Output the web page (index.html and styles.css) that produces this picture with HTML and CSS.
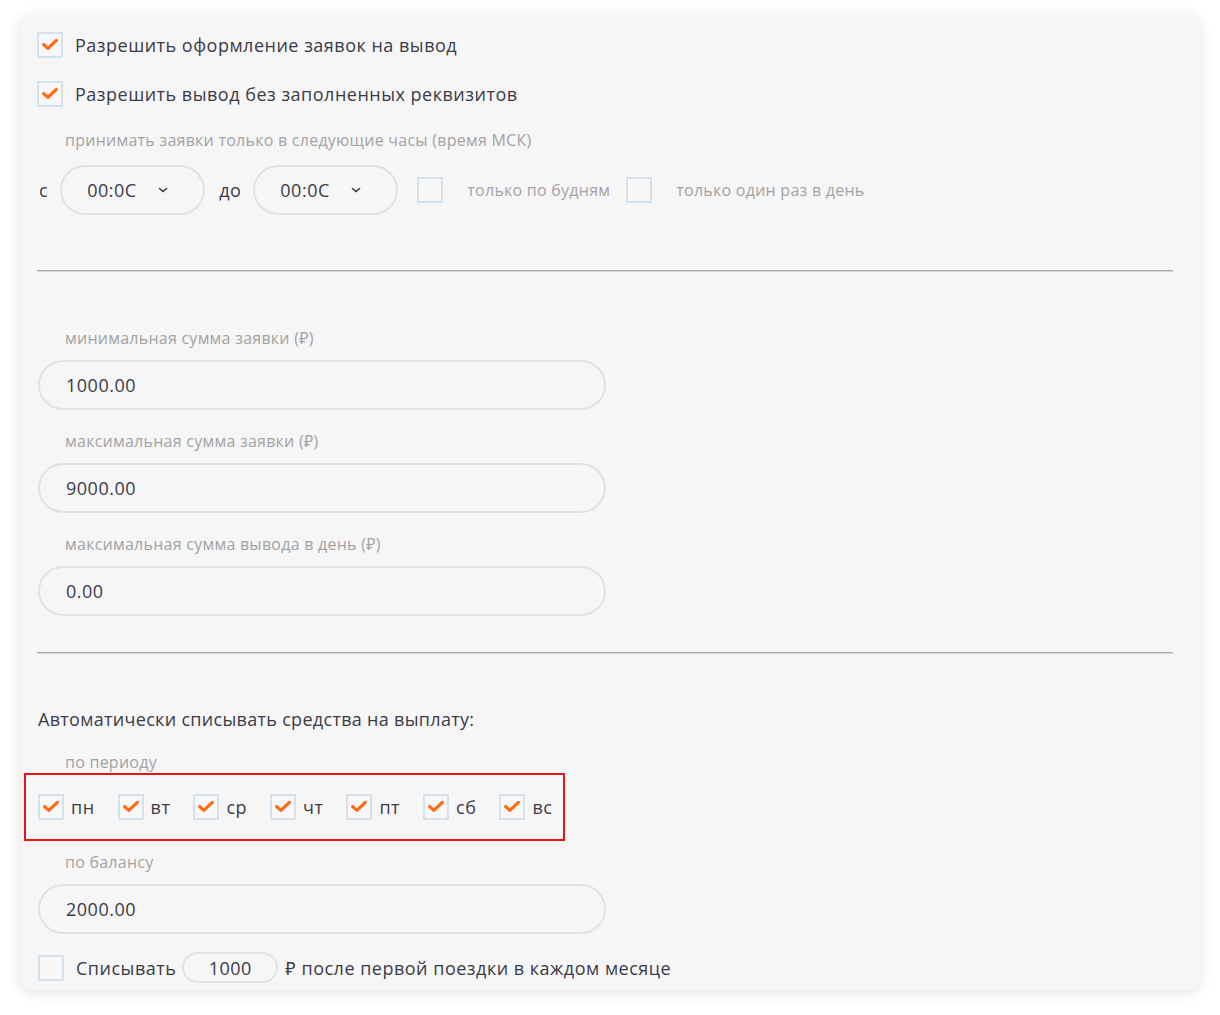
FILE: index.html
```html
<!DOCTYPE html>
<html lang="ru">
<head>
    <meta charset="UTF-8">
    <title>Настройки вывода</title>
    <link rel="stylesheet" href="styles.css">
</head>
<body>
    <div class="card">
        <label class="check-row">
            <span class="box checked"><svg viewBox="0 0 26 26"><path d="M5.5 12.5 L10.5 17 L20.5 7.5"/></svg></span>
            <span class="check-text">Разрешить оформление заявок на вывод</span>
        </label>
        <label class="check-row">
            <span class="box checked"><svg viewBox="0 0 26 26"><path d="M5.5 12.5 L10.5 17 L20.5 7.5"/></svg></span>
            <span class="check-text">Разрешить вывод без заполненных реквизитов</span>
        </label>

        <div class="field-label hours-label">принимать заявки только в следующие часы (время МСК)</div>
        <div class="hours-row">
            <span class="hours-word">с</span>
            <div class="time-select">
                <span class="time-value">00:0C</span>
                <svg class="chevron" viewBox="0 0 10 6"><path d="M1.5 1.5 L5 4.5 L8.5 1.5"/></svg>
            </div>
            <span class="hours-word">до</span>
            <div class="time-select">
                <span class="time-value">00:0C</span>
                <svg class="chevron" viewBox="0 0 10 6"><path d="M1.5 1.5 L5 4.5 L8.5 1.5"/></svg>
            </div>
            <span class="box"></span>
            <span class="muted-text">только по будням</span>
            <span class="box"></span>
            <span class="muted-text">только один раз в день</span>
        </div>

        <hr class="divider first-divider">

        <div class="field-label">минимальная сумма заявки (₽)</div>
        <div class="text-input">1000.00</div>
        <div class="field-label">максимальная сумма заявки (₽)</div>
        <div class="text-input">9000.00</div>
        <div class="field-label">максимальная сумма вывода в день (₽)</div>
        <div class="text-input">0.00</div>

        <hr class="divider second-divider">

        <div class="section-title">Автоматически списывать средства на выплату:</div>
        <div class="field-label period-label">по периоду</div>
        <div class="days-wrap">
            <div class="days">
                <label class="day"><span class="box checked"><svg viewBox="0 0 26 26"><path d="M5.5 12.5 L10.5 17 L20.5 7.5"/></svg></span><span>пн</span></label>
                <label class="day"><span class="box checked"><svg viewBox="0 0 26 26"><path d="M5.5 12.5 L10.5 17 L20.5 7.5"/></svg></span><span>вт</span></label>
                <label class="day"><span class="box checked"><svg viewBox="0 0 26 26"><path d="M5.5 12.5 L10.5 17 L20.5 7.5"/></svg></span><span>ср</span></label>
                <label class="day"><span class="box checked"><svg viewBox="0 0 26 26"><path d="M5.5 12.5 L10.5 17 L20.5 7.5"/></svg></span><span>чт</span></label>
                <label class="day"><span class="box checked"><svg viewBox="0 0 26 26"><path d="M5.5 12.5 L10.5 17 L20.5 7.5"/></svg></span><span>пт</span></label>
                <label class="day"><span class="box checked"><svg viewBox="0 0 26 26"><path d="M5.5 12.5 L10.5 17 L20.5 7.5"/></svg></span><span>сб</span></label>
                <label class="day"><span class="box checked"><svg viewBox="0 0 26 26"><path d="M5.5 12.5 L10.5 17 L20.5 7.5"/></svg></span><span>вс</span></label>
            </div>
        </div>

        <div class="field-label">по балансу</div>
        <div class="text-input">2000.00</div>

        <div class="monthly-row">
            <span class="box"></span>
            <span class="check-text">Списывать</span>
            <span class="small-input">1000</span>
            <span class="check-text">₽ после первой поездки в каждом месяце</span>
        </div>
    </div>
</body>
</html>
```

FILE: styles.css
```css
* {
    margin: 0;
    padding: 0;
    box-sizing: border-box;
}

body {
    background: #ffffff;
    font-family: 'Open Sans', 'Noto Sans', sans-serif;
    color: #3b3b48;
    padding: 15px 20px 25px 20px;
}

.card {
    width: 1180px;
    height: 975px;
    background: #f6f6f6;
    border-radius: 12px;
    box-shadow: 0 2px 14px rgba(0, 0, 0, 0.12);
    padding: 17px 27px 0 17px;
}

.box {
    width: 26px;
    height: 26px;
    flex: 0 0 26px;
    border: 2px solid #d3e2ec;
    background: #f7f7f7;
    display: inline-flex;
    align-items: center;
    justify-content: center;
}

.box svg {
    width: 26px;
    height: 26px;
    fill: none;
    stroke: #ff6b12;
    stroke-width: 3.8;
    stroke-linecap: round;
    stroke-linejoin: round;
}

.check-row {
    display: flex;
    align-items: center;
    height: 26px;
    margin-bottom: 23px;
}

.check-text {
    font-size: 18px;
    letter-spacing: 0.5px;
    margin-left: 12px;
}

.field-label {
    color: #a3a3a3;
    font-size: 16px;
    letter-spacing: 0.25px;
    margin-left: 28px;
    line-height: 20px;
}

.hours-label {
    margin-top: 0;
}

.hours-row {
    display: flex;
    align-items: center;
    height: 50px;
    margin-top: 15px;
}

.hours-word {
    font-size: 18px;
    letter-spacing: 0.5px;
    margin: 0 12px 0 2px;
}

.time-select {
    width: 145px;
    height: 50px;
    border: 2px solid #e2e2e2;
    border-radius: 25px;
    display: flex;
    align-items: center;
    padding-left: 25px;
    margin-right: 12px;
}

.time-value {
    font-size: 18px;
    letter-spacing: 0.5px;
    width: 51px;
    overflow: hidden;
    white-space: nowrap;
}

.chevron {
    width: 10px;
    height: 6px;
    margin-left: 20px;
    fill: none;
    stroke: #3b3b48;
    stroke-width: 1.6;
    stroke-linecap: round;
}

.hours-row .box {
    margin-left: 7px;
}

.hours-row .box + .muted-text {
    margin-left: 24px;
}

.muted-text {
    color: #a3a3a3;
    font-size: 16px;
    letter-spacing: 0.25px;
    margin-right: 9px;
}

.divider {
    border: none;
    border-top: 1px solid #a9a9a9;
    border-bottom: 1px solid #d6d6d6;
}

.first-divider {
    margin: 55px 0 56px 0;
}

.second-divider {
    margin: 36px 0 53px 0;
}

.text-input {
    width: 568px;
    height: 50px;
    border: 2px solid #e2e2e2;
    border-radius: 25px;
    font-size: 18px;
    letter-spacing: 0.5px;
    display: flex;
    align-items: center;
    padding-left: 26px;
    margin: 12px 0 21px 1px;
}

.section-title {
    font-size: 18px;
    letter-spacing: 0.3px;
    margin-left: 1px;
    line-height: 24px;
}

.period-label {
    margin-top: 21px;
}

.days-wrap {
    margin: 1px 0 11px -13px;
    width: 541px;
    height: 68px;
    border: 2px solid #e8141c;
    display: flex;
    align-items: center;
    padding-left: 12px;
}

.days {
    display: flex;
    align-items: center;
}

.day {
    display: flex;
    align-items: center;
    font-size: 18px;
    letter-spacing: 0.5px;
    margin-right: 23px;
}

.day span:last-child {
    margin-left: 7px;
}

.monthly-row {
    display: flex;
    align-items: center;
    margin-top: -3px;
    margin-left: 1px;
}

.monthly-row .check-text + .small-input {
    margin-left: 6px;
}

.small-input {
    width: 96px;
    height: 31px;
    border: 2px solid #e2e2e2;
    border-radius: 16px;
    font-size: 18px;
    letter-spacing: 0.5px;
    display: flex;
    align-items: center;
    justify-content: center;
}

.small-input + .check-text {
    margin-left: 7px;
}
```
